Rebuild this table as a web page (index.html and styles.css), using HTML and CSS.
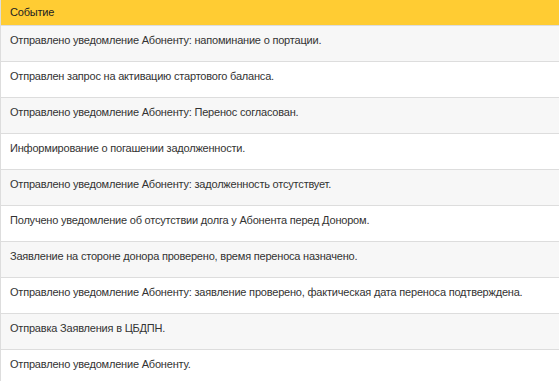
FILE: index.html
```html
<!DOCTYPE html>
<html lang="ru">
<head>
<meta charset="utf-8">
<link rel="stylesheet" href="styles.css">
</head>
<body>
<div class="grid">
  <div class="grid-head">Событие</div>
  <div class="grid-body">
    <div class="row">Отправлено уведомление Абоненту: напоминание о портации.</div>
    <div class="row">Отправлен запрос на активацию стартового баланса.</div>
    <div class="row">Отправлено уведомление Абоненту: Перенос согласован.</div>
    <div class="row">Информирование о погашении задолженности.</div>
    <div class="row">Отправлено уведомление Абоненту: задолженность отсутствует.</div>
    <div class="row">Получено уведомление об отсутствии долга у Абонента перед Донором.</div>
    <div class="row">Заявление на стороне донора проверено, время переноса назначено.</div>
    <div class="row">Отправлено уведомление Абоненту: заявление проверено, фактическая дата переноса подтверждена.</div>
    <div class="row">Отправка Заявления в ЦБДПН.</div>
    <div class="row">Отправлено уведомление Абоненту.</div>
  </div>
</div>
</body>
</html>
```
FILE: styles.css
```css
html, body {
  margin: 0;
  padding: 0;
  background: #ffffff;
}
body {
  font-family: "Liberation Sans", Arial, sans-serif;
  font-size: 11px;
  line-height: 13px;
  letter-spacing: -0.2px;
  color: #333333;
  overflow: hidden;
  height: 381px;
}
.grid {
  width: 559px;
  box-sizing: border-box;
  border-left: 1px solid #dddddd;
  display: flex;
  flex-direction: column;
}
.grid-head {
  height: 25px;
  line-height: 25px;
  padding: 0 9px;
  background: #ffcc33;
  color: #222222;
  border-bottom: 1px solid #dddddd;
}
.grid-body {
  display: flex;
  flex-direction: column;
}
.row {
  flex: none;
  height: 36px;
  box-sizing: border-box;
  padding: 8px 9px 0;
  border-bottom: 1px solid #dddddd;
}
.row:nth-child(odd) {
  background: #f7f7f7;
}
```
